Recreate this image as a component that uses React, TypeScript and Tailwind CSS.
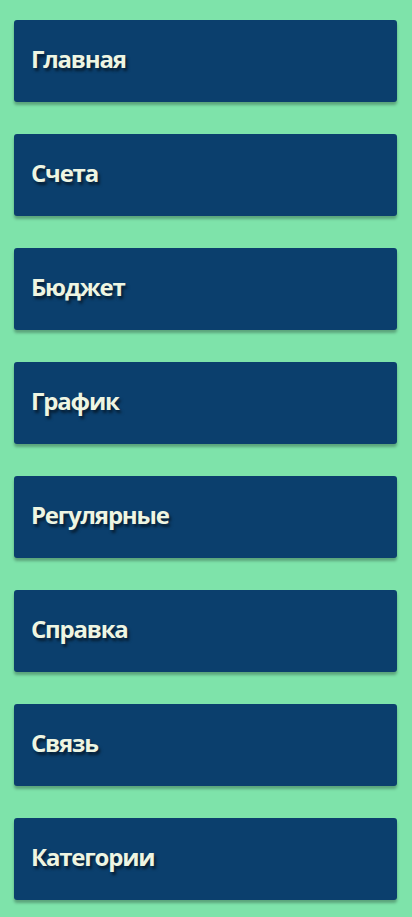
const items = [
  "Главная",
  "Счета",
  "Бюджет",
  "График",
  "Регулярные",
  "Справка",
  "Связь",
  "Категории",
];

export default function App() {
  return (
    <div className="min-h-[917px] bg-[#7ee3aa] px-[14px] pt-5 pb-4 font-['Open_Sans',sans-serif] [&>*+*]:mt-8 flex flex-col">
      {items.map((label) => (
        <a
          key={label}
          href="#"
          className="flex h-[82px] w-[383px] items-center rounded-[3px] bg-[#0b3f6d] px-[17px] pb-[5px] text-[24px] font-bold tracking-[-1.2px] text-[#eef5e2] shadow-[0_3px_3px_rgba(0,0,0,0.28)] [text-shadow:2px_3px_3px_rgba(0,0,0,0.55)]"
        >
          {label}
        </a>
      ))}
    </div>
  );
}
